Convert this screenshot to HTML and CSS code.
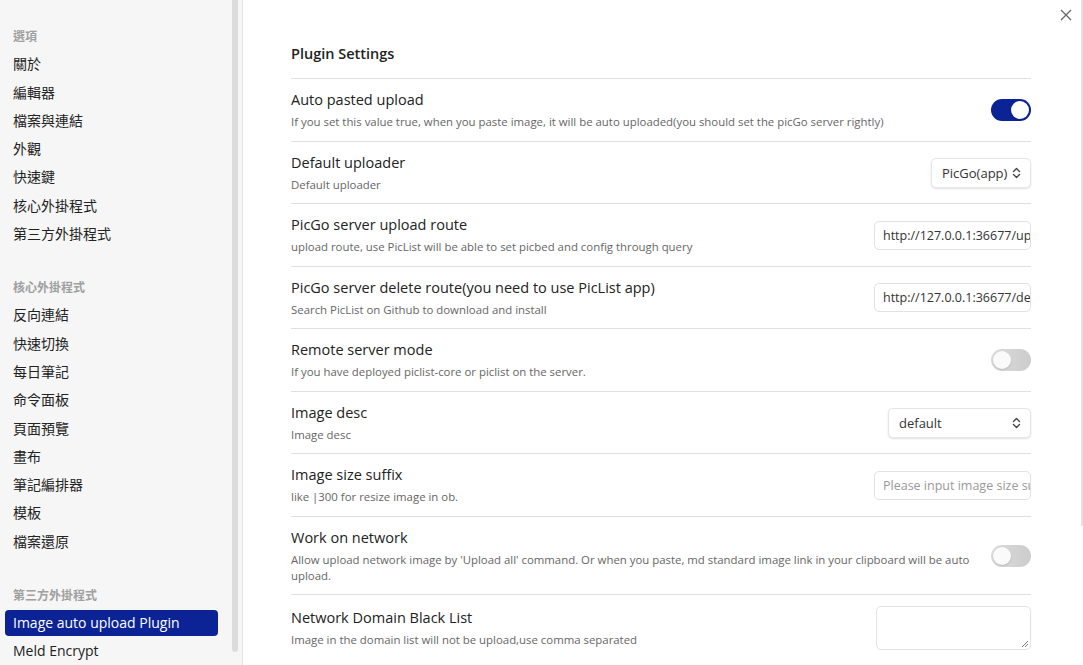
FILE: index.html
```html
<!DOCTYPE html>
<html lang="zh-Hant">
<head>
<meta charset="utf-8">
<title>Settings</title>
<link rel="stylesheet" href="styles.css">
</head>
<body>
<div class="modal">
  <nav class="sidebar">
    <div class="group">
      <div class="group-title">選項</div>
      <div class="nav-item">關於</div>
      <div class="nav-item">編輯器</div>
      <div class="nav-item">檔案與連結</div>
      <div class="nav-item">外觀</div>
      <div class="nav-item">快速鍵</div>
      <div class="nav-item">核心外掛程式</div>
      <div class="nav-item">第三方外掛程式</div>
    </div>
    <div class="group">
      <div class="group-title">核心外掛程式</div>
      <div class="nav-item">反向連結</div>
      <div class="nav-item">快速切換</div>
      <div class="nav-item">每日筆記</div>
      <div class="nav-item">命令面板</div>
      <div class="nav-item">頁面預覽</div>
      <div class="nav-item">畫布</div>
      <div class="nav-item">筆記編排器</div>
      <div class="nav-item">模板</div>
      <div class="nav-item">檔案還原</div>
    </div>
    <div class="group">
      <div class="group-title">第三方外掛程式</div>
      <div class="nav-item active">Image auto upload Plugin</div>
      <div class="nav-item">Meld Encrypt</div>
    </div>
    <div class="scroll-thumb side-thumb"></div>
  </nav>
  <main class="content">
    <h2 class="page-title">Plugin Settings</h2>

    <div class="setting">
      <div class="info">
        <div class="name">Auto pasted upload</div>
        <div class="desc">If you set this value true, when you paste image, it will be auto uploaded(you should set the picGo server rightly)</div>
      </div>
      <div class="control"><div class="toggle on"></div></div>
    </div>

    <div class="setting">
      <div class="info">
        <div class="name">Default uploader</div>
        <div class="desc">Default uploader</div>
      </div>
      <div class="control">
        <div class="select w-picgo"><span>PicGo(app)</span><svg class="chev" width="9" height="12" viewBox="0 0 9 12"><path d="M1.5 4.5L4.5 1.5L7.5 4.5M1.5 7.5L4.5 10.5L7.5 7.5" fill="none" stroke="#444" stroke-width="1.4" stroke-linecap="round" stroke-linejoin="round"/></svg></div>
      </div>
    </div>

    <div class="setting">
      <div class="info">
        <div class="name">PicGo server upload route</div>
        <div class="desc">upload route, use PicList will be able to set picbed and config through query</div>
      </div>
      <div class="control"><div class="input">http://127.0.0.1:36677/upload</div></div>
    </div>

    <div class="setting">
      <div class="info">
        <div class="name">PicGo server delete route(you need to use PicList app)</div>
        <div class="desc">Search PicList on Github to download and install</div>
      </div>
      <div class="control"><div class="input">http://127.0.0.1:36677/delete</div></div>
    </div>

    <div class="setting">
      <div class="info">
        <div class="name">Remote server mode</div>
        <div class="desc">If you have deployed piclist-core or piclist on the server.</div>
      </div>
      <div class="control"><div class="toggle"></div></div>
    </div>

    <div class="setting">
      <div class="info">
        <div class="name">Image desc</div>
        <div class="desc">Image desc</div>
      </div>
      <div class="control">
        <div class="select w-desc"><span>default</span><svg class="chev" width="9" height="12" viewBox="0 0 9 12"><path d="M1.5 4.5L4.5 1.5L7.5 4.5M1.5 7.5L4.5 10.5L7.5 7.5" fill="none" stroke="#444" stroke-width="1.4" stroke-linecap="round" stroke-linejoin="round"/></svg></div>
      </div>
    </div>

    <div class="setting">
      <div class="info">
        <div class="name">Image size suffix</div>
        <div class="desc">like |300 for resize image in ob.</div>
      </div>
      <div class="control"><div class="input placeholder">Please input image size suffix</div></div>
    </div>

    <div class="setting">
      <div class="info">
        <div class="name">Work on network</div>
        <div class="desc">Allow upload network image by 'Upload all' command. Or when you paste, md standard image link in your clipboard will be auto upload.</div>
      </div>
      <div class="control"><div class="toggle"></div></div>
    </div>

    <div class="setting">
      <div class="info">
        <div class="name">Network Domain Black List</div>
        <div class="desc">Image in the domain list will not be upload,use comma separated</div>
      </div>
      <div class="control">
        <div class="textarea"><svg class="grip" width="9" height="9" viewBox="0 0 9 9"><path d="M8 2L2 8M8 5L5 8" stroke="#777" stroke-width="1"/></svg></div>
      </div>
    </div>
  </main>
  <div class="scroll-thumb main-thumb"></div>
  <button class="close" aria-label="Close"><svg width="12" height="12" viewBox="0 0 12 12"><path d="M1 1L11 11M11 1L1 11" stroke="#666" stroke-width="1.3"/></svg></button>
</div>
</body>
</html>
```

FILE: styles.css
```css
* { box-sizing: border-box; }
html, body {
  margin: 0;
  padding: 0;
  height: 100%;
  overflow: hidden;
}
body {
  font-family: "Open Sans", "Noto Sans CJK TC", sans-serif;
  color: #222;
  background: #fff;
}
.modal {
  position: relative;
  display: flex;
  width: 1083px;
  height: 665px;
}
.sidebar {
  position: relative;
  width: 243px;
  flex: none;
  height: 100%;
  overflow: hidden;
  background: #f6f6f6;
  border-right: 1px solid #e4e4e4;
  padding: 23px 24px 40px 5px;
}
.scroll-thumb {
  position: absolute;
  background: #dcdcdc;
}
.side-thumb {
  top: 0;
  left: 232px;
  width: 6px;
  height: 652px;
  border-radius: 0 0 3px 3px;
}
.main-thumb {
  top: 0;
  right: 0;
  width: 2px;
  height: 526px;
  background: #e2e2e2;
}
.group + .group { margin-top: 27px; }
.group-title {
  font-family: "Noto Sans CJK TC", sans-serif;
  font-size: 12px;
  font-weight: 700;
  color: #a0a0a0;
  line-height: 20px;
  padding: 3px 8px;
  margin-bottom: 2.3px;
}
.nav-item {
  font-family: "Open Sans", "Noto Sans CJK TC", sans-serif;
  font-size: 14px;
  line-height: 20px;
  padding: 3px 8px;
  margin-bottom: 2.3px;
  color: #222;
  border-radius: 4px;
  white-space: nowrap;
}
.nav-item.active {
  background: #0b2394;
  color: #fff;
}
.content {
  flex: 1;
  height: 100%;
  overflow: hidden;
  padding: 44px 52px 0 48px;
}
.page-title {
  margin: 0 0 14px;
  font-size: 14.5px;
  font-weight: 600;
  line-height: 20px;
  color: #222;
}
.setting {
  display: flex;
  align-items: center;
  gap: 20px;
  border-top: 1px solid #e0e0e0;
  padding: 11px 0 10.5px;
}
.info { flex: 1; min-width: 0; }
.name {
  font-size: 14.5px;
  line-height: 20px;
  color: #222;
}
.desc {
  margin-top: 4px;
  font-size: 11.4px;
  line-height: 16px;
  color: #666;
}
.control { flex: none; display: flex; justify-content: flex-end; }
.toggle {
  position: relative;
  width: 40px;
  height: 22px;
  border-radius: 11px;
  background: linear-gradient(90deg, #dcdcdc, #cccccc);
}
.toggle::after {
  content: "";
  position: absolute;
  top: 2px;
  left: 2px;
  width: 18px;
  height: 18px;
  border-radius: 50%;
  background: #fafafa;
  box-shadow: 0 1px 2px rgba(0,0,0,0.15);
}
.toggle.on { background: #0b2394; }
.toggle.on::after { left: 20px; background: #fff; }
.select {
  display: flex;
  align-items: center;
  justify-content: space-between;
  height: 30px;
  padding: 0 9px 0 10px;
  font-size: 13px;
  color: #333;
  background: #fff;
  border: 1px solid #e6e6e6;
  border-radius: 5px;
  box-shadow: 0 1px 2px rgba(0,0,0,0.12);
}
.w-picgo { width: 100px; }
.w-desc { width: 143px; }
.input {
  width: 157px;
  height: 29px;
  padding: 0 8px;
  font-size: 12.5px;
  line-height: 27px;
  color: #333;
  border: 1px solid #e2e2e2;
  border-radius: 5px;
  white-space: nowrap;
  overflow: hidden;
}
.input.placeholder { color: #999; }
.textarea {
  position: relative;
  width: 155px;
  height: 44px;
  border: 1px solid #e2e2e2;
  border-radius: 5px;
}
.grip { position: absolute; right: 1px; bottom: 1px; }
.close {
  position: absolute;
  top: 8px;
  right: 10px;
  width: 14px;
  height: 14px;
  padding: 0;
  border: 0;
  background: transparent;
  display: flex;
  align-items: center;
  justify-content: center;
}
```
